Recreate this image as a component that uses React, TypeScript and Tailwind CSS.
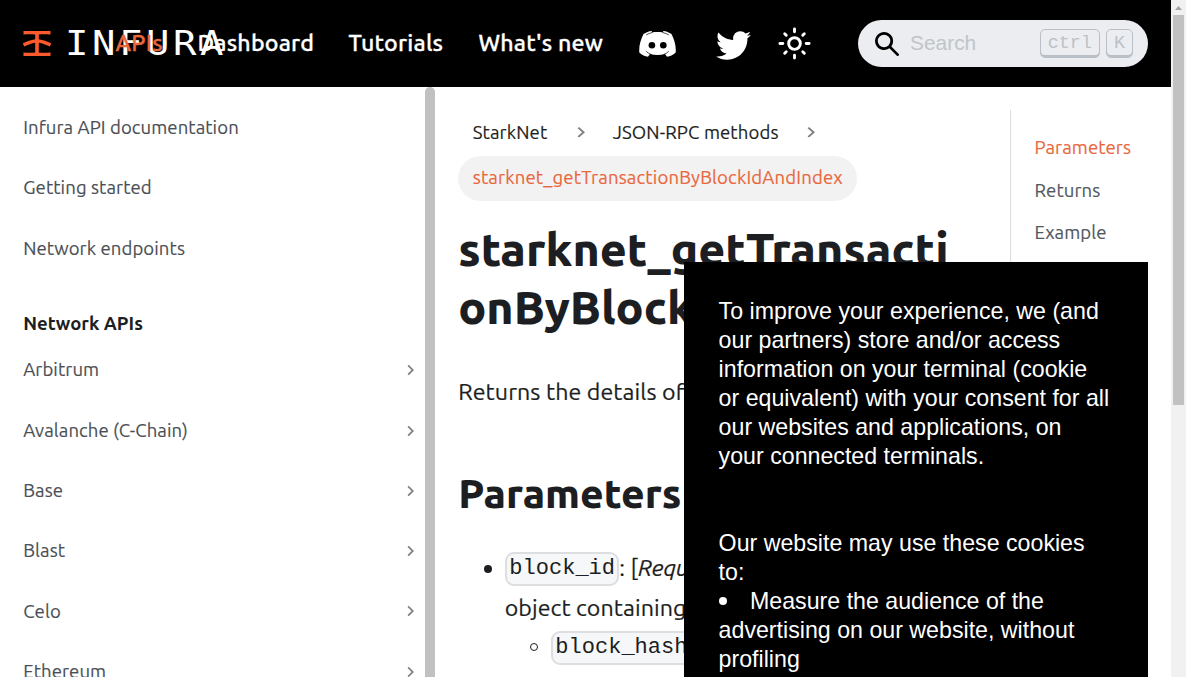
import type { ReactNode } from "react";
import { FaTwitter } from "react-icons/fa6";

const topItems = ["Infura API documentation", "Getting started", "Network endpoints"];
const networks = ["Arbitrum", "Avalanche (C-Chain)", "Base", "Blast", "Celo", "Ethereum"];

function Chevron({ className }: { className: string }) {
  return (
    <svg viewBox="8 5 8 14" preserveAspectRatio="none" className={className} fill="#808080">
      <path d="M8.59 16.59 13.17 12 8.59 7.41 10 6l6 6-6 6z" />
    </svg>
  );
}

function LogoMark() {
  return (
    <svg viewBox="0 0 28 25" className="h-[25px] w-7 shrink-0" fill="#ff5a2d">
      <path d="M0.500 0H27.500V3.600C23 3 19.500 3.100 15.800 3.500V8.300C20 9.100 24.500 10.500 28.200 12.300L26.800 15.600C23 13.700 19.500 12.500 15.800 11.800V21.500C19.500 21.900 23 22 27.500 21.400V25H0.500V21.400C5 22 8.500 21.900 12.200 21.500V11.800C8.500 12.500 5 13.700 1.200 15.600L-.2 12.300C3.500 10.500 8 9.100 12.200 8.300V3.500C8.500 3.100 5 3 0.500 3.600Z" />
    </svg>
  );
}

function DiscordIcon() {
  return (
    <svg viewBox="0 0 37 28" className="h-7 w-[37px] shrink-0">
      <path
        fill="white"
        d="M4.500 4C7 2.300 10 1.200 12.500 .9L13.400 2.300C17 1.800 20 1.800 23.600 2.300L24.500 .9C27 1.200 30 2.300 32.500 4C35.500 10 37.200 16 36.700 22.500C34 25 31 26.400 28 26.800L26 24C21 25.300 16 25.300 11 24L9 26.800C6 26.400 3 25 .3 22.500C-.2 16 1.500 10 4.500 4Z"
      />
      <path
        fill="none"
        stroke="black"
        strokeWidth="0.700"
        strokeLinecap="round"
        d="M7.500 4.700Q10 3.200 13.400 2.500M29.500 4.700Q27 3.200 23.600 2.500M7.500 21.600Q9 23.300 12 24.400M29.500 21.600Q28 23.300 25 24.400"
      />
      <circle cx="12.900" cy="15.300" r="3.300" />
      <circle cx="24.300" cy="15.300" r="3.300" />
    </svg>
  );
}

function SunIcon() {
  return (
    <svg viewBox="0 0 24 24" className="size-[35px]" fill="none" stroke="white" strokeWidth="2" strokeLinecap="round">
      <circle cx="12" cy="12" r="4" />
      <path d="M2 12h2M20 12h2M12 2v2M12 20v2M5.280 5.280l1.060 1.060M17.660 17.660l1.060 1.060M18.720 5.280l-1.060 1.060M6.340 17.660l-1.060 1.060" />
    </svg>
  );
}

function Key({ children }: { children: ReactNode }) {
  return (
    <kbd className="flex h-[29px] items-center rounded-[5px] border border-[#b9bfc6] px-[7px] pt-px font-['Liberation_Mono',monospace] text-[18.400px] leading-none text-[#bcc1c8] shadow-[inset_0_-2px_0_#b9bfc6]">
      {children}
    </kbd>
  );
}

function Code({ children }: { children: ReactNode }) {
  return (
    <code className="mt-px inline-block h-[34px] rounded-[9px] border-2 border-[#dcdee0] bg-[#f6f7f8] px-[2.300px] align-middle font-['Liberation_Mono',monospace] text-[22.040px] leading-[29px] tracking-normal text-[#1c1e21]">
      {children}
    </code>
  );
}

function Header() {
  return (
    <header className="flex h-[87px] items-center bg-black pl-[23px] text-white">
      <div className="flex w-[92.500px] shrink-0 items-center overflow-visible">
        <LogoMark />
        <span className="ml-[14px] origin-left scale-x-[1.180] font-['DejaVu_Sans_Mono',monospace] text-[33px] leading-none tracking-[3px]">INFURA</span>
      </div>
      <nav className="relative flex shrink-0 pb-0.5 text-[23.200px] font-medium tracking-[0.180px] whitespace-nowrap [-webkit-text-stroke:0.300px_currentColor]">
        <a className="w-[82px] text-[#e9673c]">APIs</a>
        <a className="w-[151px]">Dashboard</a>
        <a className="w-[130px]">Tutorials</a>
        <a className="w-[160.500px]">What's new</a>
      </nav>
      <DiscordIcon />
      <FaTwitter className="mt-[3px] ml-[39.500px] size-[35px] shrink-0" />
      <span className="ml-[26.500px] shrink-0">
        <SunIcon />
      </span>
      <div className="ml-[46px] flex h-[47px] w-[290px] shrink-0 items-center rounded-full bg-[#ebedf0] pr-[15px] pl-[17px]">
        <svg viewBox="0 0 16 16" className="size-6 text-black" fill="currentColor">
          <path d="M6.029 10.203a4.174 4.174 0 1 1 4.174-4.174 4.156 4.156 0 0 1-4.174 4.174Zm9.692 4.220L10.899 9.600A5.880 5.880 0 0 0 12.058 6.029 6.005 6.005 0 1 0 9.600 10.899l4.823 4.823a.897.897 0 0 0 1.299 0 .897.897 0 0 0-.001-1.299Z" />
        </svg>
        <span className="ml-[11px] flex-1 pb-0.5 font-['Liberation_Sans',sans-serif] text-[20.900px] text-[#c0c4ca]">Search</span>
        <div className="flex gap-1.5">
          <Key>ctrl</Key>
          <Key>K</Key>
        </div>
      </div>
    </header>
  );
}

function Sidebar() {
  return (
    <aside className="flex w-[435px] shrink-0 overflow-hidden">
      <div className="w-[425px] pt-[10.600px] pr-[11px] pl-[23.200px] text-[18.560px] tracking-[0.080px] text-[#4b4f55] [-webkit-text-stroke:0.150px_currentColor]">
        {topItems.map((t) => (
          <div key={t} className="flex h-[60.400px] items-center">{t}</div>
        ))}
        <div className="flex h-[61.300px] items-center pt-[30px] font-semibold tracking-normal text-[#1c1e21] [-webkit-text-stroke:0px]">Network APIs</div>
        {networks.map((t) => (
          <div key={t} className="flex h-[60.320px] items-center justify-between">
            <span>{t}</span>
            <Chevron className="h-[12px] w-[7px]" />
          </div>
        ))}
      </div>
      <div className="h-[620px] w-[10px] rounded-full bg-[#c1c1c1]" />
    </aside>
  );
}

function Article() {
  return (
    <main className="w-[575px] shrink-0 overflow-hidden pt-[23px] pl-[23.200px] text-[#1c1e21]">
      <nav className="text-[18.560px] tracking-[0.120px] whitespace-nowrap [-webkit-text-stroke:0.150px_currentColor]">
        <div className="flex h-[45px] items-center">
          <span className="w-[118.500px] pl-[14.500px]">StarkNet</span>
          <Chevron className="h-[12.500px] w-2" />
          <span className="w-[222px] pl-[28px]">JSON-RPC methods</span>
          <Chevron className="h-[12.500px] w-2" />
        </div>
        <div className="mt-px flex h-[45px] w-[399px] items-center rounded-full bg-[#f2f2f2] pb-0.5 pl-[14.500px] tracking-[0.155px] text-[#e9673c]">
          starknet_getTransactionByBlockIdAndIndex
        </div>
      </nav>
      <h1 className="mt-[19px] text-[46.400px] leading-[58px] font-extrabold whitespace-nowrap">
        starknet_getTransacti
        <br />
        onByBlockIdAndIndex
      </h1>
      <p className="mt-[36px] text-[23.200px] leading-[38px] tracking-[0.100px] whitespace-nowrap [-webkit-text-stroke:0.200px_currentColor]">Returns the details of a transaction</p>
      <h2 className="mt-[58px] text-[40.600px] leading-[50px] font-extrabold">Parameters</h2>
      <div className="mt-[30px] text-[23.200px] leading-[39px] tracking-[0.080px] whitespace-nowrap">
        <div className="flex h-[40px] items-center">
          <span className="mt-0.5 mr-[13px] ml-[25.800px] size-2 rounded-full bg-[#1c1e21]" />
          <Code>block_id</Code>
          <span className="pb-0.5 [-webkit-text-stroke:0.200px_currentColor]">: [<em>Required</em>] The block</span>
        </div>
        <div className="h-[39px] pl-[46.500px] [-webkit-text-stroke:0.200px_currentColor]">object containing one of</div>
        <div className="flex h-[40px] items-center">
          <span className="mr-[13px] ml-[71.800px] size-2 rounded-full border border-[#1c1e21]" />
          <Code>block_hash</Code>
        </div>
      </div>
    </main>
  );
}

function TableOfContents() {
  return (
    <aside className="mt-[23px] h-[560px] w-[161px] shrink-0 border-l border-[#dadde1] pt-[17px] pl-[23.500px] text-[18.560px] tracking-[0.080px] text-[#525860] [-webkit-text-stroke:0.150px_currentColor]">
      <div className="flex h-[42.500px] items-center text-[#e9673c]">Parameters</div>
      <div className="flex h-[42.500px] items-center">Returns</div>
      <div className="flex h-[42.500px] items-center">Example</div>
    </aside>
  );
}

function CookieNotice() {
  return (
    <section className="absolute top-[262px] left-[684px] h-[415px] w-[464px] overflow-hidden bg-black pt-[35px] pl-[34.600px] font-['Liberation_Sans',Arial,sans-serif] text-[23.200px] leading-[29px] whitespace-nowrap text-white">
      <p>
        To improve your experience, we (and<br />
        our partners) store and/or access<br />
        information on your terminal (cookie<br />
        or equivalent) with your consent for all<br />
        our websites and applications, on<br />
        your connected terminals.
      </p>
      <p className="mt-[58px]">
        Our website may use these cookies<br />
        to:
      </p>
      <ul>
        <li>
          <span className="mr-[23.400px] mb-1 inline-block size-2 rounded-full bg-white align-middle" />
          Measure the audience of the<br />
          advertising on our website, without<br />
          profiling
        </li>
      </ul>
    </section>
  );
}

function PageScrollbar() {
  return (
    <div className="flex w-[15px] flex-col items-center bg-[#f1f1f1]">
      <svg viewBox="0 0 15 15" className="h-[15px] w-[15px]">
        <path d="M4 10h7L7.500 6z" fill="#a3a3a3" />
      </svg>
      <div className="h-[390px] w-[11px] bg-[#c1c1c1]" />
    </div>
  );
}

export default function App() {
  return (
    <div className="relative flex h-[677px] w-[1186px] overflow-hidden bg-white font-['Ubuntu','Noto_Sans',sans-serif]">
      <div className="flex w-[1171px] flex-col">
        <Header />
        <div className="flex h-[590px] overflow-hidden">
          <Sidebar />
          <Article />
          <TableOfContents />
        </div>
      </div>
      <PageScrollbar />
      <CookieNotice />
    </div>
  );
}
